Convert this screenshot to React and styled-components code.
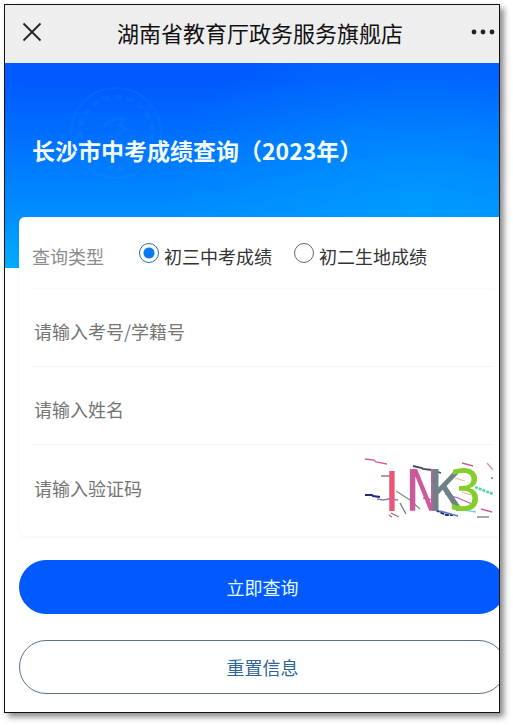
import React, { useState } from 'react';
import styled, { createGlobalStyle } from 'styled-components';

const GlobalStyle = createGlobalStyle`
  * {
    box-sizing: border-box;
  }
  body {
    margin: 0;
    background-color: #ffffff;
    font-family: "Noto Sans CJK SC", sans-serif;
  }
  button,
  input {
    font-family: inherit;
  }
`;

const Page = styled.div`
  padding: 4px 13px 13px 4px;
`;
const Screen = styled.div`
  overflow: hidden;
  border: 1px solid #111111;
  background-color: #ffffff;
  box-shadow: 4px 4px 6px rgba(0, 0, 0, 0.45);
`;
const TopBar = styled.header`
  height: 58px;
  padding: 0 3px 0 17px;
  display: flex;
  align-items: center;
  justify-content: space-between;
  background-color: #eeeeee;
`;
const TopBarTitle = styled.h1`
  margin: 0;
  padding: 0 0 4px 8px;
  font-size: 22px;
  line-height: 32px;
  font-weight: 400;
  color: #111111;
  white-space: nowrap;
`;
const IconButton = styled.button`
  padding: 0 0 4px;
  border: none;
  background: none;
  display: flex;
  color: #222222;
  cursor: pointer;
`;
const Banner = styled.section`
  height: 205px;
  padding: 24px 27px;
  background:
    radial-gradient(ellipse 260px 200px at 84% 72%, rgba(0, 170, 255, 0.5), rgba(0, 170, 255, 0)),
    linear-gradient(180deg, #005aff 8%, #008cff 72%, #00aeff 100%);
`;
/* the seal and the title share one grid cell, the title lies over the seal */
const BannerContent = styled.div`
  display: grid;
  align-items: center;
  & > * {
    grid-area: 1 / 1;
  }
`;
const SealBox = styled.div`
  padding-left: 36px;
  display: flex;
`;
const BannerTitle = styled.h2`
  margin: 0;
  padding-top: 34px;
  font-size: 23px;
  line-height: 32px;
  font-weight: 700;
  color: #f2fcff;
`;
const Form = styled.form`
  margin: -51px -7px 0 14px;
  padding-bottom: 18px;
`;
const Card = styled.div`
  padding: 0 13px;
  border-radius: 6px;
  background-color: #ffffff;
  box-shadow: 0 1px 4px rgba(0, 0, 0, 0.04);
`;
const Row = styled.div`
  height: 78px;
  padding-top: 7px;
  display: flex;
  align-items: center;
  border-bottom: 1px solid #f4f4f4;
`;
const CaptchaRow = styled(Row)`
  height: 91px;
  padding: 0 0 5px;
  border-bottom: none;
`;
const TypeRow = styled(Row)`
  height: 72px;
  padding: 0;
  border-bottom-color: #fafafa;
`;
const TypeLabel = styled.span`
  width: 107px;
  padding-top: 6px;
  font-size: 18px;
  line-height: 26px;
  color: #8c8c8c;
`;
const RadioLabel = styled.label`
  margin-right: 22px;
  display: flex;
  align-items: center;
  gap: 5px;
  font-size: 18px;
  line-height: 26px;
  color: #333333;
  white-space: nowrap;
`;
const RadioText = styled.span`
  padding-top: 6px;
`;
const Radio = styled.input`
  appearance: none;
  width: 20px;
  height: 20px;
  margin: 0;
  border: 1px solid #666666;
  border-radius: 50%;
  background-color: #ffffff;
  &:checked {
    border-color: #2b6fa8;
    background: radial-gradient(circle, #0a78f0 5px, #ffffff 6px);
  }
`;
const TextInput = styled.input`
  flex: 1;
  min-width: 0;
  height: 40px;
  padding: 0 2px;
  border: none;
  outline: none;
  background: none;
  font-size: 18px;
  color: #333333;
  &::placeholder {
    color: #757575;
    opacity: 1;
  }
`;
const Actions = styled.div`
  padding-top: 24px;
  display: flex;
  flex-direction: column;
  gap: 26px;
`;
const ActionButton = styled.button`
  height: 54px;
  border: 1px solid ${(props) => (props.$primary ? '#005aff' : '#5b7088')};
  border-radius: 27px;
  background-color: ${(props) => (props.$primary ? '#005aff' : '#ffffff')};
  color: ${(props) => (props.$primary ? '#e8fbff' : '#2f6699')};
  font-size: 18px;
  cursor: pointer;
`;

const CloseIcon = () => (
  <svg width="20" height="20" viewBox="0 0 20 20" fill="none" stroke="currentColor" strokeWidth="1.8">
    <path d="M1.5 1.5 18.5 18.5M18.5 1.5 1.5 18.5" />
  </svg>
);

const MoreIcon = () => (
  <svg width="26" height="20" viewBox="0 0 26 20" fill="currentColor">
    <circle cx="4" cy="10" r="2.4" />
    <circle cx="13" cy="10" r="2.4" />
    <circle cx="22" cy="10" r="2.4" />
  </svg>
);

const Seal = () => (
  <svg width="96" height="92" viewBox="0 0 96 92" fill="none" stroke="#3d9dff" opacity="0.1">
    <circle cx="48" cy="46" r="45" strokeWidth="2" />
    <circle cx="48" cy="46" r="36" strokeWidth="5" strokeDasharray="7 5" />
    <path d="M36 40q6-10 20-8l-4 6 6 4-10 6v20M38 68h20" strokeWidth="3" />
  </svg>
);

const Captcha = () => (
  <svg width="129" height="80" viewBox="0 -8 129 80" role="img" aria-label="验证码">
    <g fill="none" strokeWidth="1.3">
      <path d="M1 3l9 1 2 2 11 2" stroke="#d45c9c" />
      <path d="M17 20h12" stroke="#8c5a78" />
      <path d="M1 39l7 0 1 1 7 1" stroke="#25257c" strokeWidth="2" />
      <path d="M13 43l6 1 6-1 9 1" stroke="#7f83b5" />
      <path d="M32 35l14 9 10 9" stroke="#6c9c86" />
      <path d="M36 47l6 11" stroke="#668573" />
      <path d="M27 57l8 4M25 59l3 2" stroke="#b36a6a" />
      <path d="M49 10l9 2 1 1 9 1 9 3" stroke="#4d4858" strokeWidth="1.8" />
      <path d="M59 42l10 2" stroke="#d457a4" />
      <path d="M68 31l10 2M88 52l24 4" stroke="#78d4cf" />
      <path d="M81 38l13 4 14 6" stroke="#b45ccf" />
      <path d="M72 54l10 5 7 0" stroke="#262f70" strokeWidth="2" strokeDasharray="4 1" />
      <path d="M76 55l18 5" stroke="#5878c8" />
      <path d="M91 22l10 3M98 36l9 3" stroke="#f1b49c" />
      <path d="M98 7l11 3" stroke="#d35a86" />
      <path d="M123 7l6 7" stroke="#d793ac" />
      <path d="M111 31l18 7" stroke="#50d8a4" strokeWidth="2.6" strokeDasharray="3 1" />
      <path d="M117 53l11 3" stroke="#c66491" />
      <path d="M113 61h12" stroke="#777777" />
      <path d="M128 21v2" stroke="#4a62aa" />
    </g>
    <g fontFamily="'DejaVu Sans Mono', monospace" fontSize="57">
      <text x="20" y="55" fill="#ed5576" fontFamily="'Liberation Sans', sans-serif">
        I
      </text>
      <text x="42" y="55" fill="#ca5a9c">N</text>
      <text x="65" y="55" fill="#6d8286">K</text>
      <text x="84" y="55" fill="#83cd2c">3</text>
    </g>
  </svg>
);

const queryTypes = [
  { id: 'grade9', title: '初三中考成绩' },
  { id: 'grade8', title: '初二生地成绩' },
];

const App = () => {
  const [type, setType] = useState('grade9');
  return (
    <Page>
      <GlobalStyle />
      <Screen>
        <TopBar>
          <IconButton type="button" aria-label="关闭">
            <CloseIcon />
          </IconButton>
          <TopBarTitle>湖南省教育厅政务服务旗舰店</TopBarTitle>
          <IconButton type="button" aria-label="更多">
            <MoreIcon />
          </IconButton>
        </TopBar>
        <Banner>
          <BannerContent>
            <SealBox>
              <Seal />
            </SealBox>
            <BannerTitle>长沙市中考成绩查询（2023年）</BannerTitle>
          </BannerContent>
        </Banner>
        <Form onSubmit={(e) => e.preventDefault()} onReset={() => setType('grade9')}>
          <Card>
            <TypeRow role="radiogroup" aria-labelledby="type-label">
              <TypeLabel id="type-label">查询类型</TypeLabel>
              {queryTypes.map((item) => (
                <RadioLabel key={item.id}>
                  <Radio
                    type="radio"
                    name="type"
                    checked={type === item.id}
                    onChange={() => setType(item.id)}
                  />
                  <RadioText>{item.title}</RadioText>
                </RadioLabel>
              ))}
            </TypeRow>
            <Row>
              <TextInput aria-label="考号/学籍号" placeholder="请输入考号/学籍号" />
            </Row>
            <Row>
              <TextInput aria-label="姓名" placeholder="请输入姓名" />
            </Row>
            <CaptchaRow>
              <TextInput aria-label="验证码" placeholder="请输入验证码" />
              <Captcha />
            </CaptchaRow>
          </Card>
          <Actions>
            <ActionButton type="submit" $primary>
              立即查询
            </ActionButton>
            <ActionButton type="reset">重置信息</ActionButton>
          </Actions>
        </Form>
      </Screen>
    </Page>
  );
};

export default App;
